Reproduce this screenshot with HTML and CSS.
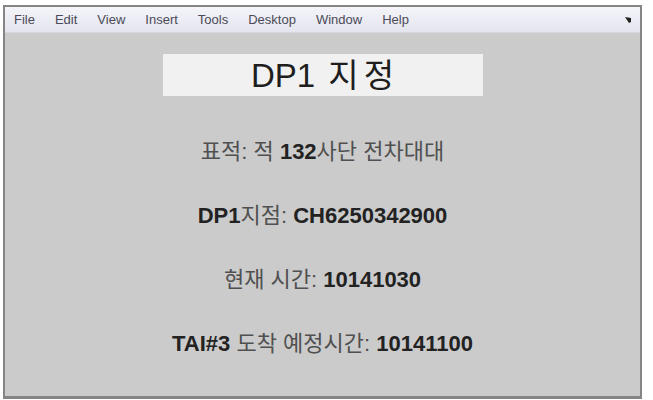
FILE: index.html
```html
<!DOCTYPE html>
<html lang="ko">
<head>
    <meta charset="UTF-8">
    <title>DP1 지정</title>
    <link rel="stylesheet" href="styles.css">
</head>
<body>
    <div class="window">
        <!-- 메뉴 바 -->
        <div class="menubar">
            <span class="menu-item">File</span>
            <span class="menu-item">Edit</span>
            <span class="menu-item">View</span>
            <span class="menu-item">Insert</span>
            <span class="menu-item">Tools</span>
            <span class="menu-item">Desktop</span>
            <span class="menu-item">Window</span>
            <span class="menu-item">Help</span>
            <svg class="dock-arrow" width="8" height="8" viewBox="0 0 8 8">
                <path d="M1 1 L7 6 L7 2 Z M1 1 L5 7 L7 6 Z" fill="#222"/>
            </svg>
        </div>

        <div class="content">
            <div class="title-box">DP1 <span class="title-ko">지정</span></div>
            <p class="info"><span class="ko">표적: 적</span> <b>132</b><span class="ko">사단 전차대대</span></p>
            <p class="info"><b>DP1</b><span class="ko">지점:</span> <b>CH6250342900</b></p>
            <p class="info"><span class="ko">현재 시간:</span> <b>10141030</b></p>
            <p class="info"><b>TAI#3</b> <span class="ko">도착 예정시간:</span> <b>10141100</b></p>
        </div>
    </div>
</body>
</html>
```

FILE: styles.css
```css
body {
    margin: 0;
    padding: 0;
    background-color: #fff;
    font-family: "Liberation Sans", "Noto Sans CJK KR", sans-serif;
}
.window {
    margin: 5px 11px 0 3px;
    height: 389px;
    border: 2px solid #858585;
    border-bottom-width: 3px;
    background-color: #cbcbcb;
    display: flex;
    flex-direction: column;
}
/* 메뉴 바 */
.menubar {
    height: 25px;
    display: flex;
    align-items: center;
    gap: 20px;
    padding: 0 8px 0 9px;
    background: linear-gradient(#f4f4fa, #e4e4ee);
    border-bottom: 1px solid #d6d6de;
    font-size: 13px;
    color: #4a4a58;
}
.dock-arrow {
    margin-left: auto;
}
.content {
    flex: 1;
    display: flex;
    flex-direction: column;
    align-items: center;
}
.title-box {
    margin-top: 21px;
    width: 320px;
    height: 42px;
    line-height: 44px;
    background-color: #f1f1f1;
    text-align: center;
    font-size: 33px;
    color: #1e1e1e;
    word-spacing: 4px;
}
.title-ko {
    letter-spacing: 5px;
    margin-right: -5px;
}
.info {
    margin: 0;
    font-size: 22px;
    line-height: 22px;
    color: #222;
}
.content .info:nth-of-type(1) {
    margin-top: 45px;
}
.content .info + .info {
    margin-top: 42px;
}
.ko {
    color: #505050;
}
```
